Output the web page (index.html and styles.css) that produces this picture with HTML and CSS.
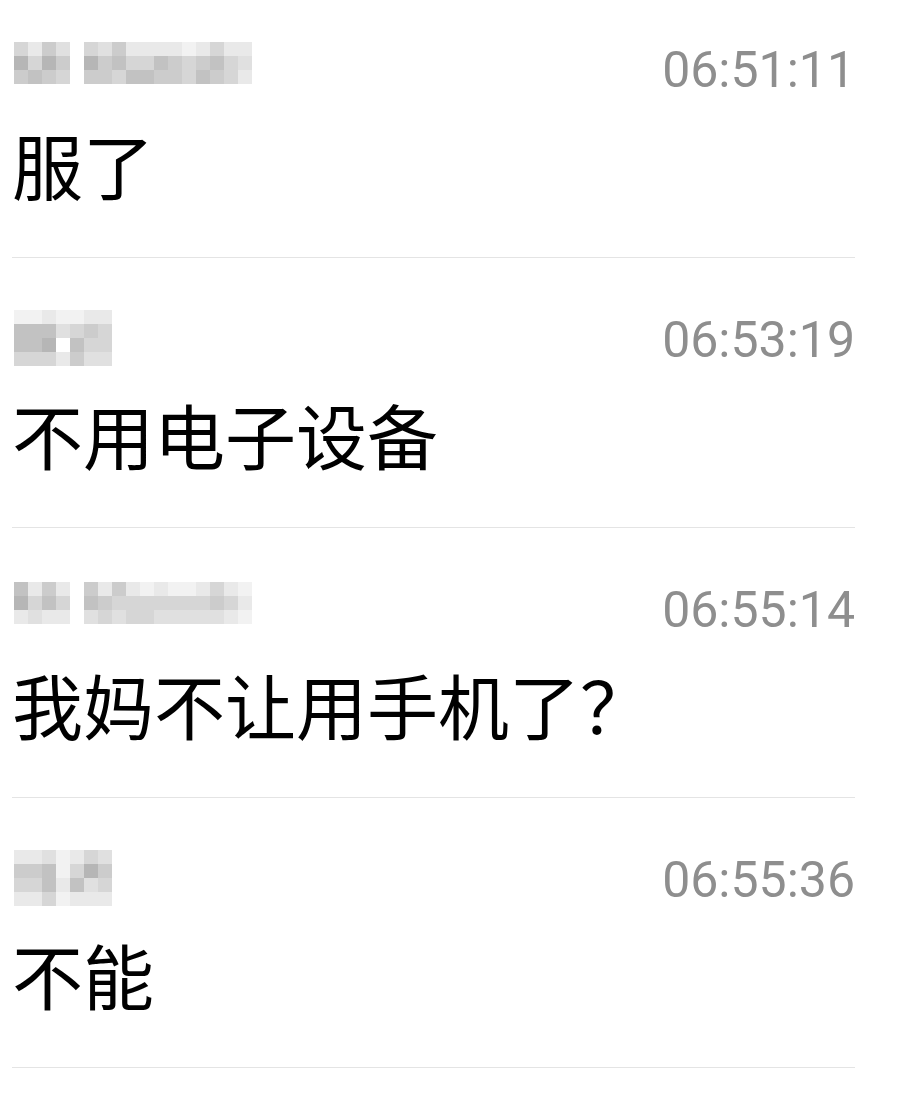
FILE: index.html
```html
<!DOCTYPE html>
<html lang="zh-CN">

<head>
    <meta charset="UTF-8">
    <meta name="viewport" content="width=device-width, initial-scale=1.0">
    <title>聊天记录</title>
    <link rel="stylesheet" href="styles.css">
</head>

<body>
    <ul class="msglist">
        <li class="msg">
            <div class="msg__head">
                <div class="mosaic mosaic--wide">
                    <span class="g4"></span><span class="g6"></span><span class="g3"></span><span class="g5"></span><span class="g0"></span><span class="g4"></span><span class="g5"></span><span class="g3"></span><span class="g6"></span><span class="g6"></span><span class="g6"></span><span class="g6"></span><span class="g7"></span><span class="g6"></span><span class="g4"></span><span class="g6"></span><span class="g6"></span>
                    <span class="g1"></span><span class="g4"></span><span class="g1"></span><span class="g3"></span><span class="g0"></span><span class="g1"></span><span class="g3"></span><span class="g2"></span><span class="g4"></span><span class="g4"></span><span class="g2"></span><span class="g3"></span><span class="g4"></span><span class="g3"></span><span class="g2"></span><span class="g4"></span><span class="g5"></span>
                    <span class="g3"></span><span class="g2"></span><span class="g3"></span><span class="g4"></span><span class="g0"></span><span class="g3"></span><span class="g3"></span><span class="g4"></span><span class="g2"></span><span class="g2"></span><span class="g3"></span><span class="g3"></span><span class="g4"></span><span class="g2"></span><span class="g3"></span><span class="g4"></span><span class="g6"></span>
                </div>
                <span class="msg__time">06:51:11</span>
            </div>
            <p class="msg__text">服了</p>
        </li>
        <li class="msg">
            <div class="msg__head">
                <div class="mosaic mosaic--short">
                    <span class="g7"></span><span class="g7"></span><span class="g6"></span><span class="g7"></span><span class="g7"></span><span class="g6"></span><span class="g6"></span>
                    <span class="g2"></span><span class="g2"></span><span class="g2"></span><span class="g5"></span><span class="g4"></span><span class="g3"></span><span class="g4"></span>
                    <span class="g2"></span><span class="g2"></span><span class="g1"></span><span class="g0"></span><span class="g2"></span><span class="g4"></span><span class="g4"></span>
                    <span class="g4"></span><span class="g4"></span><span class="g4"></span><span class="g6"></span><span class="g3"></span><span class="g5"></span><span class="g5"></span>
                </div>
                <span class="msg__time">06:53:19</span>
            </div>
            <p class="msg__text">不用电子设备</p>
        </li>
        <li class="msg">
            <div class="msg__head">
                <div class="mosaic mosaic--wide">
                    <span class="g2"></span><span class="g6"></span><span class="g3"></span><span class="g6"></span><span class="g0"></span><span class="g3"></span><span class="g6"></span><span class="g3"></span><span class="g6"></span><span class="g7"></span><span class="g6"></span><span class="g7"></span><span class="g7"></span><span class="g6"></span><span class="g4"></span><span class="g6"></span><span class="g7"></span>
                    <span class="g1"></span><span class="g4"></span><span class="g2"></span><span class="g4"></span><span class="g0"></span><span class="g2"></span><span class="g3"></span><span class="g4"></span><span class="g4"></span><span class="g4"></span><span class="g4"></span><span class="g4"></span><span class="g4"></span><span class="g4"></span><span class="g3"></span><span class="g4"></span><span class="g6"></span>
                    <span class="g6"></span><span class="g5"></span><span class="g6"></span><span class="g6"></span><span class="g0"></span><span class="g5"></span><span class="g4"></span><span class="g5"></span><span class="g4"></span><span class="g4"></span><span class="g5"></span><span class="g5"></span><span class="g5"></span><span class="g5"></span><span class="g5"></span><span class="g6"></span><span class="g7"></span>
                </div>
                <span class="msg__time">06:55:14</span>
            </div>
            <p class="msg__text">我妈不让用手机了？</p>
        </li>
        <li class="msg">
            <div class="msg__head">
                <div class="mosaic mosaic--short">
                    <span class="g6"></span><span class="g6"></span><span class="g5"></span><span class="g7"></span><span class="g6"></span><span class="g4"></span><span class="g5"></span>
                    <span class="g3"></span><span class="g3"></span><span class="g2"></span><span class="g7"></span><span class="g4"></span><span class="g1"></span><span class="g3"></span>
                    <span class="g4"></span><span class="g4"></span><span class="g2"></span><span class="g6"></span><span class="g2"></span><span class="g5"></span><span class="g4"></span>
                    <span class="g6"></span><span class="g6"></span><span class="g4"></span><span class="g7"></span><span class="g6"></span><span class="g6"></span><span class="g6"></span>
                </div>
                <span class="msg__time">06:55:36</span>
            </div>
            <p class="msg__text">不能</p>
        </li>
    </ul>
</body>

</html>
```

FILE: styles.css
```css
body {
    margin: 0;
    background-color: #fff;
    font-family: "Noto Sans CJK SC", "Noto Sans", sans-serif;
    color: #000;
}

.msglist {
    list-style: none;
    margin: 0 48px 0 12px;
    padding: 0;
}

.msg {
    padding: 54px 0 58px;
    border-bottom: 1px solid #e4e4e4;
}

.msg:first-child {
    padding-top: 42px;
}

.msg__head {
    display: flex;
    justify-content: space-between;
    align-items: flex-start;
    height: 56px;
}

.msg__time {
    font-family: Roboto, "Liberation Sans", sans-serif;
    font-size: 50px;
    line-height: 56px;
    color: #8e8e8e;
}

.msg__text {
    margin: 30px 0 0;
    font-size: 71px;
    line-height: 71px;
}

/* pixelated name */
.mosaic {
    display: grid;
    grid-auto-rows: 14px;
    margin-left: 2px;
    filter: blur(0.6px);
}

.mosaic--wide {
    grid-template-columns: repeat(17, 14px);
}

.mosaic--short {
    grid-template-columns: repeat(7, 14px);
    margin-top: -2px;
}

.g0 { background: #fff; }
.g1 { background: #b6b6b6; }
.g2 { background: #c2c2c2; }
.g3 { background: #cccccc; }
.g4 { background: #d6d6d6; }
.g5 { background: #e0e0e0; }
.g6 { background: #e9e9e9; }
.g7 { background: #f2f2f2; }
```
